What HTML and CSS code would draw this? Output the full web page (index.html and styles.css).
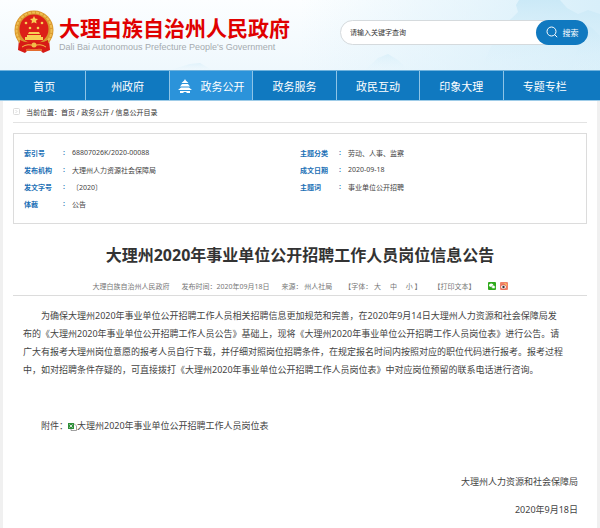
FILE: index.html
```html
<!DOCTYPE html>
<html lang="zh-CN">
<head>
    <meta charset="UTF-8">
    <meta name="viewport" content="width=device-width, initial-scale=1.0">
    <title>大理州2020年事业单位公开招聘工作人员岗位信息公告</title>
    <link rel="stylesheet" href="styles.css">
</head>
<body>
    <header class="header">
        <svg class="scenery" viewBox="0 0 600 70" preserveAspectRatio="none" aria-hidden="true">
            <defs>
                <linearGradient id="peak" x1="0" y1="0" x2="0" y2="1">
                    <stop offset="0" stop-color="#c6e7f6"/>
                    <stop offset="1" stop-color="#e2f3fb" stop-opacity="0.2"/>
                </linearGradient>
                <linearGradient id="mist" x1="0" y1="0" x2="1" y2="0">
                    <stop offset="0" stop-color="#d8effa" stop-opacity="0"/>
                    <stop offset="1" stop-color="#d8effa"/>
                </linearGradient>
            </defs>
            <path fill="url(#mist)" d="M300 0H600V70H300z"/>
            <path fill="url(#peak)" opacity="0.8" d="M500 28 L512 18 L518 12 L516 5 L519 0 L560 0 L567 8 L578 14 L588 10 L600 14 V70 H480z"/>
            <path fill="url(#peak)" opacity="0.5" d="M572 70 L580 38 L586 24 L592 28 L600 36 V70z"/>
            <path fill="url(#peak)" opacity="0.4" d="M365 70 L378 58 L388 54 L398 60 L408 70z"/>
            <path fill="url(#peak)" opacity="0.4" d="M170 70 L190 64 L200 63 L212 70z"/>
        </svg>
        <a class="logo" href="#">
            <svg class="emblem" viewBox="0 0 40 44" aria-hidden="true">
                <path fill="#d71b16" d="M5 29 L4 40 L11 43 L13 41 H27 L29 43 L36 40 L35 29z"/>
                <circle cx="20" cy="20" r="19.500" fill="#d9972d"/>
                <circle cx="20" cy="20" r="17.500" fill="none" stroke="#efbd50" stroke-width="2" stroke-dasharray="3 1"/>
                <circle cx="20" cy="19" r="14.500" fill="#dc1f18"/>
                <path fill="#f8cf55" d="M20 6l1.200 2.600 2.800.3-2 1.900.6 2.800-2.600-1.400-2.600 1.400.6-2.800-2-1.900 2.800-.3z"/>
                <g fill="#f8cf55">
                    <circle cx="12" cy="13" r="1.300"/>
                    <circle cx="28" cy="13" r="1.300"/>
                    <circle cx="16" cy="18" r="1.300"/>
                    <circle cx="24" cy="18" r="1.300"/>
                    <path d="M15 22h10l1 2H14z M13 25h14v2h2v3H11v-3h2z"/>
                </g>
                <path fill="#d71b16" d="M6 30 Q13 34 20 31 Q27 34 34 30 L34 40 Q26 37 20 40 Q14 37 6 40z"/>
                <path fill="none" stroke="#f1bd48" d="M8 37 Q14 33 20 36 Q26 33 32 37 M12 40h16"/>
                <circle cx="20" cy="35" r="2.500" fill="#f1bd48"/>
            </svg>
            <span class="logo-text">
                <strong class="logo-name">大理白族自治州人民政府</strong>
                <span class="logo-sub">Dali Bai Autonomous Prefecture People's Government</span>
            </span>
        </a>
        <form class="search">
            <input type="text" class="search-input" placeholder="请输入关键字查询" aria-label="请输入关键字查询">
            <button type="button" class="search-button">
                <svg class="search-icon" viewBox="0 0 12 12" aria-hidden="true">
                    <circle cx="5.500" cy="5.500" r="4.500" fill="none" stroke="#fff"/>
                    <path d="M8.700 8.700l2.500 2.500" stroke="#fff"/>
                </svg>
                搜索
            </button>
        </form>
    </header>

    <nav class="nav">
        <a href="#">首页</a>
        <a href="#">州政府</a>
        <a href="#" class="active">
            <svg class="nav-icon" viewBox="0 0 14 14" fill="#fff" aria-hidden="true">
                <path d="M7 0l.8 1.500L10.500 4h-7l2.700-2.500z M4 5h6l2 2.500H2z M3 8.500h8l3 2.500H0z M2 12h10v2H8.500v-1h-3v1H2z"/>
            </svg>
            政务公开
        </a>
        <a href="#">政务服务</a>
        <a href="#">政民互动</a>
        <a href="#">印象大理</a>
        <a href="#">专题专栏</a>
    </nav>

    <main class="main">
        <div class="breadcrumb">
            <svg class="crumb-icon" viewBox="0 0 7 7" fill="none" stroke="#dcdcdc" aria-hidden="true">
                <rect x="0.500" y="0.500" width="6" height="6" rx="1"/>
                <path d="M2.500 2l1.500 1.500L2.500 5"/>
            </svg>
            <span>当前位置：<a href="#">首页</a> / <a href="#">政务公开</a> / <a href="#">信息公开目录</a></span>
        </div>

        <div class="info">
            <dl class="info-col">
                <dt>索引号</dt><dd>68807026K/2020-00088</dd>
                <dt>发布机构</dt><dd>大理州人力资源社会保障局</dd>
                <dt>发文字号</dt><dd>〔2020〕</dd>
                <dt>体裁</dt><dd>公告</dd>
            </dl>
            <dl class="info-col">
                <dt>主题分类</dt><dd>劳动、人事、监察</dd>
                <dt>成文日期</dt><dd>2020-09-18</dd>
                <dt>主题词</dt><dd>事业单位公开招聘</dd>
            </dl>
        </div>

        <article>
            <h1 class="title">大理州2020年事业单位公开招聘工作人员岗位信息公告</h1>
            <div class="meta">
                <span>大理白族自治州人民政府</span>
                <span>发布时间：2020年09月18日</span>
                <span>来源： 州人社局</span>
                <span class="font-size">【字体： <a href="#">大</a> <a href="#">中</a> <a href="#">小</a> 】</span>
                <a href="#">【打印文本】</a>
                <span class="share">
                    <svg viewBox="0 0 8 8" role="img" aria-label="微信">
                        <rect width="8" height="8" rx="1" fill="#2faa1c"/>
                        <ellipse cx="3.200" cy="3.200" rx="2.200" ry="1.800" fill="#fff"/>
                        <ellipse cx="5.400" cy="5" rx="1.900" ry="1.500" fill="#fff" stroke="#2faa1c" stroke-width="0.400"/>
                    </svg>
                    <svg viewBox="0 0 8 8" role="img" aria-label="微博">
                        <rect width="8" height="8" rx="1" fill="#f0836a"/>
                        <ellipse cx="3.500" cy="5" rx="3" ry="2.200" fill="#fff" stroke="#d9301f" stroke-width="0.600"/>
                        <circle cx="3.500" cy="5" r="1.200" fill="#333"/>
                        <path d="M4.500 1.500q2 0 2 2" fill="none" stroke="#ffd45a"/>
                    </svg>
                </span>
            </div>
            <div class="content">
                <p>为确保大理州2020年事业单位公开招聘工作人员相关招聘信息更加规范和完善，在2020年9月14日大理州人力资源和社会保障局发<br>布的《大理州2020年事业单位公开招聘工作人员公告》基础上，现将《大理州2020年事业单位公开招聘工作人员岗位表》进行公告。请<br>广大有报考大理州岗位意愿的报考人员自行下载，并仔细对照岗位招聘条件，在规定报名时间内按照对应的职位代码进行报考。报考过程<br>中，如对招聘条件存疑的，可直接拨打《大理州2020年事业单位公开招聘工作人员岗位表》中对应岗位预留的联系电话进行咨询。</p>
                <p class="attachment">附件：<svg class="file-icon" viewBox="0 0 9 9" aria-hidden="true">
                    <path d="M3 2h3.500l2 2v4.500H3z" fill="#fff" stroke="#888" stroke-width="0.800"/>
                    <rect y="1" width="6" height="6" fill="#2f8f3a"/>
                    <path d="M1.500 2.500l3 3M4.500 2.500l-3 3" stroke="#fff" stroke-width="0.800"/>
                </svg><a href="#">大理州2020年事业单位公开招聘工作人员岗位表</a></p>
                <p class="sign">大理州人力资源和社会保障局</p>
                <p class="sign">2020年9月18日</p>
            </div>
        </article>
    </main>
</body>
</html>
```

FILE: styles.css
```css
* {
    box-sizing: border-box;
}
body {
    margin: 0;
    font-family: "Noto Sans", "Noto Sans CJK SC", sans-serif;
    font-size: 7px;
    color: #444;
    background-color: #f0f0f0;
}
a {
    color: inherit;
    text-decoration: none;
}
svg {
    display: block;
    flex: none;
}
.header {
    position: relative;
    display: flex;
    justify-content: space-between;
    align-items: center;
    height: 70px;
    padding: 0 12px 6px 14px;
    background: linear-gradient(to bottom, #fcfeff, #eff8fd);
}
.scenery {
    position: absolute;
    top: 0;
    left: 0;
    width: 100%;
    height: 100%;
}
.logo {
    position: relative;
    display: flex;
    align-items: center;
    gap: 5px;
}
.emblem {
    width: 40px;
    height: 44px;
}
.logo-text {
    display: flex;
    flex-direction: column;
    padding-top: 3px;
}
.logo-name {
    font-family: "Noto Sans CJK SC", sans-serif;
    font-size: 21px;
    line-height: 27px;
    color: #e00000;
}
.logo-sub {
    font-family: "Liberation Sans", Arial, sans-serif;
    font-size: 9px;
    line-height: 12px;
    color: #a5abb0;
}
.search {
    position: relative;
    display: flex;
    width: 248px;
    height: 25px;
    background-color: #fff;
    border: 1px solid #d5dadd;
    border-radius: 13px;
}
.search-input {
    flex: 1;
    min-width: 0;
    padding: 0 9px;
    font: inherit;
    border: none;
    outline: none;
    background: none;
}
.search-input::placeholder {
    color: #333;
}
.search-button {
    display: flex;
    justify-content: center;
    align-items: center;
    gap: 5px;
    width: 52px;
    margin: -1px;
    padding: 0;
    font: inherit;
    font-size: 8px;
    color: #fff;
    background-color: #1079c0;
    border: none;
    border-radius: 13px;
    cursor: pointer;
}
.search-icon {
    width: 12px;
    height: 12px;
}
.nav {
    display: flex;
    height: 31px;
    padding: 0 14px 0 3px;
    font-size: 11px;
    color: #fff;
    background-color: #1079c0;
    border-top: 1px solid #6fb2dd;
    border-bottom: 1px solid #9fcce8;
}
.nav a {
    flex: 1;
    display: flex;
    justify-content: center;
    align-items: center;
    border-right: 1px solid #8fc4e6;
}
.nav a:last-child {
    border-right: none;
}
.nav .active {
    gap: 9px;
    background-color: #2b93da;
}
.nav-icon {
    width: 14px;
    height: 14px;
}
.main {
    margin: 0 3px;
    padding: 0 10px 10px;
    background-color: #fff;
}
.breadcrumb {
    display: flex;
    align-items: center;
    gap: 6px;
    height: 22px;
    color: #333;
    border-bottom: 1px solid #e3e3e3;
}
.crumb-icon {
    width: 7px;
    height: 7px;
}
.info {
    display: grid;
    grid-template-columns: 1fr 1fr;
    margin-top: 10px;
    padding: 10px 10px 11px;
    border: 1px solid #dcdcdc;
}
.info-col {
    display: grid;
    grid-template-columns: 48px 1fr;
    grid-auto-rows: 17px;
    align-items: center;
    margin: 0;
}
.info dt {
    display: flex;
    justify-content: space-between;
    padding-right: 7px;
    font-weight: bold;
    color: #1a6fb5;
}
.info dt::after {
    content: ":";
}
.info dd {
    margin: 0;
}
.title {
    margin: 19px 0 0;
    font-size: 16px;
    line-height: 24px;
    text-align: center;
    color: #333;
}
.meta {
    display: flex;
    justify-content: center;
    align-items: center;
    gap: 12px;
    height: 29px;
    padding-top: 9px;
    color: #777;
    border-bottom: 1px solid #dcdcdc;
}
.font-size {
    white-space: pre;
}
.font-size a {
    margin-right: 7px;
}
.font-size a:last-child {
    margin-right: 0;
}
.share {
    display: flex;
    gap: 4px;
}
.share svg {
    width: 8px;
    height: 8px;
}
.content {
    padding: 11px 9px 0 10px;
    font-size: 9px;
    line-height: 18px;
}
.content p {
    margin: 0;
    text-indent: 2em;
    white-space: nowrap;
}
.content .attachment {
    margin-top: 38px;
}
.file-icon {
    display: inline-block;
    width: 9px;
    height: 9px;
    vertical-align: middle;
}
.content .sign {
    margin-top: 10px;
    text-align: right;
}
.content .attachment + .sign {
    margin-top: 38px;
}
```
